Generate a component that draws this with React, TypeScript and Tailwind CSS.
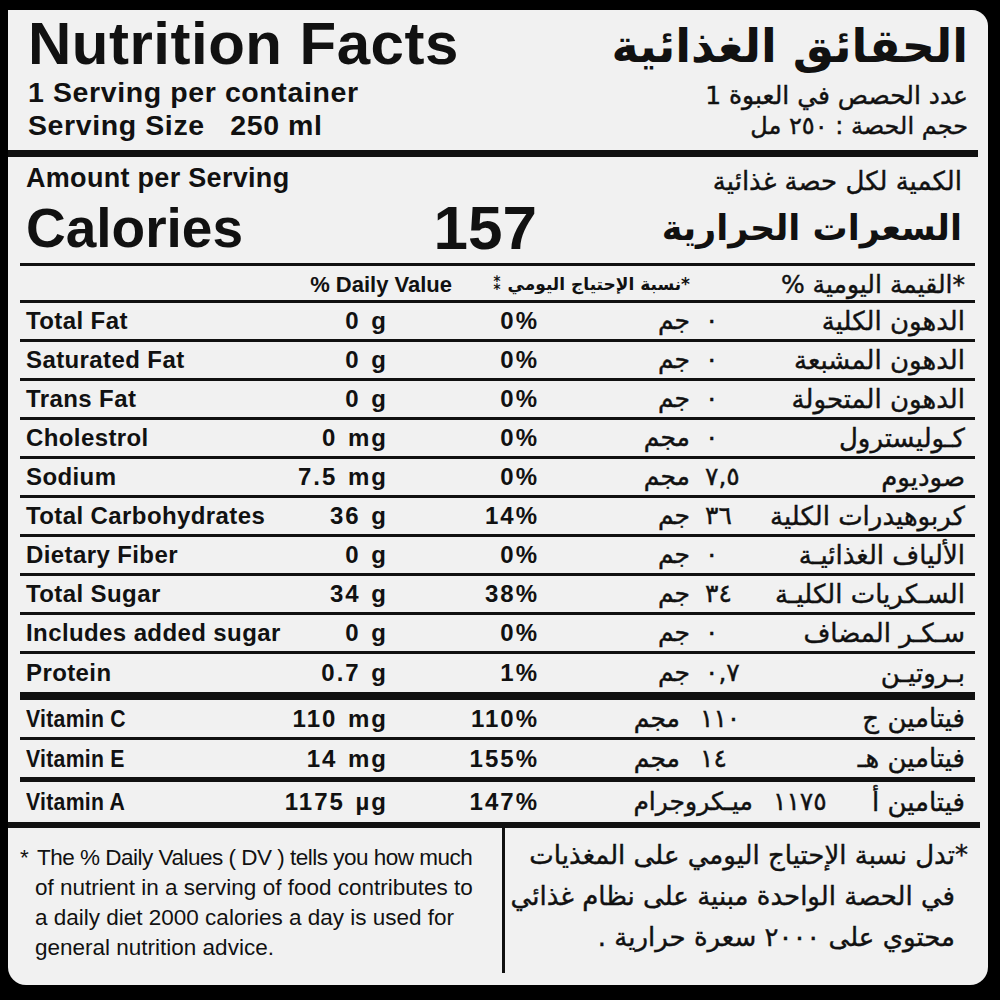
import React from 'react';

type Row = {
  en: string;
  amt: string;
  pct: string;
  unit: string;
  val: string;
  ar: string;
  h: string;
  unitW: string;
  gap: string;
  narrow?: boolean;
};

const EN = "font-['Liberation_Sans',Arial,sans-serif]";
const AR = "font-['DejaVu_Sans',sans-serif]";

const rows: Row[] = [
  { en: 'Total Fat', amt: '0 g', pct: '0%', unit: 'جم', val: '٠', ar: 'الدهون الكلية', h: 'h-[39px] border-b-[3px]', unitW: 'w-[153px]', gap: 'pl-[15px]' },
  { en: 'Saturated Fat', amt: '0 g', pct: '0%', unit: 'جم', val: '٠', ar: 'الدهون المشبعة', h: 'h-[39px] border-b-[3px]', unitW: 'w-[153px]', gap: 'pl-[15px]' },
  { en: 'Trans Fat', amt: '0 g', pct: '0%', unit: 'جم', val: '٠', ar: 'الدهون المتحولة', h: 'h-[39px] border-b-[3px]', unitW: 'w-[153px]', gap: 'pl-[15px]' },
  { en: 'Cholestrol', amt: '0 mg', pct: '0%', unit: 'مجم', val: '٠', ar: 'كـوليسترول', h: 'h-[39px] border-b-[3px]', unitW: 'w-[153px]', gap: 'pl-[15px]' },
  { en: 'Sodium', amt: '7.5 mg', pct: '0%', unit: 'مجم', val: '٧,٥', ar: 'صوديوم', h: 'h-[39px] border-b-[3px]', unitW: 'w-[153px]', gap: 'pl-[15px]' },
  { en: 'Total Carbohydrates', amt: '36 g', pct: '14%', unit: 'جم', val: '٣٦', ar: 'كربوهيدرات الكلية', h: 'h-[39px] border-b-[3px]', unitW: 'w-[153px]', gap: 'pl-[15px]' },
  { en: 'Dietary Fiber', amt: '0 g', pct: '0%', unit: 'جم', val: '٠', ar: 'الألياف الغذائيـة', h: 'h-[39px] border-b-[3px]', unitW: 'w-[153px]', gap: 'pl-[15px]' },
  { en: 'Total Sugar', amt: '34 g', pct: '38%', unit: 'جم', val: '٣٤', ar: 'السـكريات الكليـة', h: 'h-[39px] border-b-[3px]', unitW: 'w-[153px]', gap: 'pl-[15px]' },
  { en: 'Includes added sugar', amt: '0 g', pct: '0%', unit: 'جم', val: '٠', ar: 'سـكـر المضاف', h: 'h-[39px] border-b-[3px]', unitW: 'w-[153px]', gap: 'pl-[15px]' },
  { en: 'Protein', amt: '0.7 g', pct: '1%', unit: 'جم', val: '٠,٧', ar: 'بـروتيـن', h: 'h-[46px] border-b-[8px]', unitW: 'w-[153px]', gap: 'pl-[15px]' },
  { en: 'Vitamin C', amt: '110 mg', pct: '110%', unit: 'مجم', val: '١١٠', ar: 'فيتامين ج', h: 'h-[40px] border-b-[3px]', unitW: 'w-[143px]', gap: 'pl-[20px]', narrow: true },
  { en: 'Vitamin E', amt: '14 mg', pct: '155%', unit: 'مجم', val: '١٤', ar: 'فيتامين هـ', h: 'h-[42px] border-b-[5px]', unitW: 'w-[143px]', gap: 'pl-[20px]', narrow: true },
  { en: 'Vitamin A', amt: '1175 µg', pct: '147%', unit: 'ميـكروجرام', val: '١١٧٥', ar: 'فيتامين أ', h: 'h-[40px]', unitW: 'w-[216px]', gap: 'pl-[20px]', narrow: true },
];

const NutrientRow: React.FC<{ r: Row }> = ({ r }) => (
  <div className={`flex items-center border-[#111] ${r.h}`}>
    <div className={`flex w-[366px] items-center justify-between pl-[6px] text-[24px] font-bold ${EN}`}>
      {r.narrow ? (
        <span className="inline-block origin-left scale-x-[0.885] whitespace-nowrap tracking-[0.3px]">{r.en}</span>
      ) : (
        <span className="whitespace-nowrap tracking-[0.4px]">{r.en}</span>
      )}
      <span className="-mr-[2px] whitespace-nowrap tracking-[2px] [word-spacing:2px]">{r.amt}</span>
    </div>
    <div className={`w-[151px] text-right text-[24px] font-bold tracking-[2px] ${EN}`}>
      <span className="-mr-[2px]">{r.pct}</span>
    </div>
    <div dir="rtl" className={`${r.unitW} text-right text-[25px] [-webkit-text-stroke:0.4px] ${AR}`}>
      {r.unit}
    </div>
    <div className={`${r.gap} text-[25px] [-webkit-text-stroke:0.4px] ${AR}`}>{r.val}</div>
    <div dir="rtl" className={`flex-1 pl-[10px] pr-[10px] text-right text-[26px] [-webkit-text-stroke:0.4px] ${AR}`}>
      {r.ar}
    </div>
  </div>
);

const App: React.FC = () => {
  return (
    <div className="min-h-[1000px] w-[1000px] bg-black pl-[8px] pt-[10px] text-[#111]">
      <div className="flex h-[975px] w-[980px] flex-col overflow-hidden rounded-tr-[16px] rounded-b-[18px] bg-[#f1f1f1]">
        {/* header */}
        <div className="flex h-[140px] justify-between">
          <div className={`pl-[20px] pt-[4px] font-bold ${EN}`}>
            <div className="h-[60px] text-[60px] leading-[60px] tracking-[0.5px]">Nutrition Facts</div>
            <div className="mt-[4px] h-[28px] text-[28.5px] leading-[28px] tracking-[0.6px]">1 Serving per container</div>
            <div className="mt-[5px] h-[28px] whitespace-pre text-[28.5px] leading-[28px] tracking-[0.6px]">Serving Size   250 ml</div>
          </div>
          <div dir="rtl" className={`pr-[20px] pt-[8px] text-right ${AR}`}>
            <div className="h-[56px] text-[46px] font-bold leading-[56px]">الحقائق الغذائية</div>
            <div className="mt-[9px] h-[26px] text-[25px] leading-[26px] [-webkit-text-stroke:0.4px]">عدد الحصص في العبوة 1</div>
            <div className="mt-[4px] h-[26px] text-[24px] leading-[26px] [-webkit-text-stroke:0.4px]">حجم الحصة : ٢٥٠ مل</div>
          </div>
        </div>
        <div className="mr-[10px] h-[7px] bg-[#111]" />

        {/* calories */}
        <div className="h-[106px] pl-[18px] pr-[26px]">
          <div className="mt-[7px] flex h-[28px] items-center justify-between">
            <span className={`text-[27px] font-bold tracking-[0.3px] ${EN}`}>Amount per Serving</span>
            <span dir="rtl" className={`mt-[6px] text-[26px] [-webkit-text-stroke:0.4px] ${AR}`}>الكمية لكل حصة غذائية</span>
          </div>
          <div className="mt-[8px] flex h-[56px] items-center">
            <div className={`flex w-[511px] items-center justify-between font-bold ${EN}`}>
              <span className="text-[55px] leading-[56px]">Calories</span>
              <span className="text-[62px] leading-[56px]">157</span>
            </div>
            <div dir="rtl" className={`flex-1 text-right text-[35px] font-bold leading-[56px] ${AR}`}>
              السعرات الحرارية
            </div>
          </div>
        </div>
        <div className="ml-[12px] mr-[13px] h-[3px] bg-[#111]" />

        {/* table */}
        <div className="ml-[12px] mr-[13px]">
          <div className="flex h-[37px] items-center border-b-[3px] border-[#111] pt-[3px]">
            <div className={`w-[432px] text-right text-[22px] font-bold ${EN}`}>% Daily Value</div>
            <div dir="rtl" className={`w-[238px] text-right text-[17px] font-bold ${AR}`}>
              *نسبة الإحتياج اليومي ⁑
            </div>
            <div dir="rtl" className={`flex-1 pr-[10px] text-right text-[25px] [-webkit-text-stroke:0.4px] ${AR}`}>
              *القيمة اليومية %
            </div>
          </div>
          {rows.map((r) => (
            <NutrientRow key={r.en} r={r} />
          ))}
        </div>
        <div className="mr-[8px] h-[6px] bg-[#111]" />

        {/* footer */}
        <div className="flex flex-1">
          <div className={`flex w-[494px] pl-[12px] pt-[15px] text-[22.5px] leading-[30px] ${EN}`}>
            <span className="w-[17px] shrink-0">*</span>
            <div className="whitespace-nowrap">
              <div className="tracking-[-0.5px]">The % Daily Values ( DV ) tells you how much</div>
              <div className="-ml-[2px]">of nutrient in a serving of food contributes to</div>
              <div className="-ml-[2px]">a daily diet 2000 calories a day is used for</div>
              <div className="-ml-[2px]">general nutrition advice.</div>
            </div>
          </div>
          <div className="mb-[12px] w-[3px] bg-[#111]" />
          <div dir="rtl" className={`flex-1 pr-[33px] pt-[7px] text-right text-[26px] leading-[41px] [-webkit-text-stroke:0.4px] ${AR}`}>
            <div className="-mr-[13px] whitespace-nowrap">*تدل نسبة الإحتياج اليومي على المغذيات</div>
            <div className="whitespace-nowrap">في الحصة الواحدة مبنية على نظام غذائي</div>
            <div className="whitespace-nowrap">محتوي على ٢٠٠٠ سعرة حرارية .</div>
          </div>
        </div>
      </div>
    </div>
  );
};

export default App;
